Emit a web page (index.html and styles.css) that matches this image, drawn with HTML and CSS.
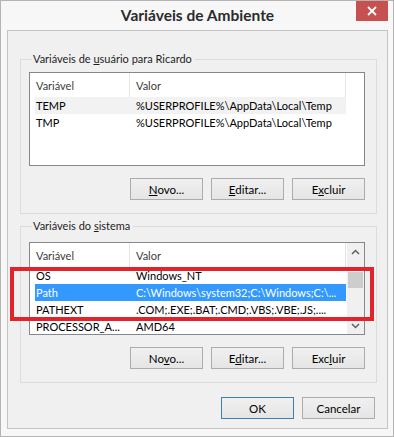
FILE: index.html
```html
<!DOCTYPE html>
<html lang="pt">
  <head>
    <meta charset="UTF-8" />
    <meta name="viewport" content="width=device-width, initial-scale=1.0" />
    <title>Variáveis de Ambiente</title>
    <link rel="stylesheet" href="styles.css">
  </head>
  <body>
    <div class="window">
      <header class="titlebar">
        <span></span>
        <h1 class="title">Variáveis de Ambiente</h1>
        <button class="close" aria-label="Fechar">
          <svg width="10" height="10" viewBox="0 0 10 10">
            <path d="M1 1 L9 9 M9 1 L1 9" stroke="#fff" stroke-width="1.8" fill="none" />
          </svg>
        </button>
      </header>

      <main class="client">
        <fieldset class="group">
          <legend>Variáveis de <u>u</u>suário para Ricardo</legend>
          <div class="list">
            <div class="list-body">
              <div class="list-head">
                <span class="col-name">Variável</span>
                <span class="col-value">Valor</span>
              </div>
              <div class="row hover">
                <span class="col-name">TEMP</span>
                <span class="col-value">%USERPROFILE%\AppData\Local\Temp</span>
              </div>
              <div class="row">
                <span class="col-name">TMP</span>
                <span class="col-value">%USERPROFILE%\AppData\Local\Temp</span>
              </div>
            </div>
          </div>
          <div class="buttons">
            <button class="btn"><u>N</u>ovo...</button>
            <button class="btn"><u>E</u>ditar...</button>
            <button class="btn">E<u>x</u>cluir</button>
          </div>
        </fieldset>

        <fieldset class="group system">
          <legend>Variáveis do <u>s</u>istema</legend>
          <div class="list">
            <div class="list-body">
              <div class="list-head">
                <span class="col-name">Variável</span>
                <span class="col-value">Valor</span>
              </div>
              <div class="row">
                <span class="col-name">OS</span>
                <span class="col-value">Windows_NT</span>
              </div>
              <div class="row selected">
                <span class="col-name">Path</span>
                <span class="col-value">C:\Windows\system32;C:\Windows;C:\...</span>
              </div>
              <div class="row">
                <span class="col-name">PATHEXT</span>
                <span class="col-value">.COM;.EXE;.BAT;.CMD;.VBS;.VBE;.JS;....</span>
              </div>
              <div class="row">
                <span class="col-name">PROCESSOR_A...</span>
                <span class="col-value">AMD64</span>
              </div>
            </div>
            <div class="scrollbar">
              <span class="arrow">
                <svg width="9" height="6" viewBox="0 0 9 6"><path d="M1 5 L4.5 1.5 L8 5" stroke="#606060" stroke-width="1.5" fill="none" /></svg>
              </span>
              <span class="track"><span class="thumb"></span></span>
              <span class="arrow">
                <svg width="9" height="6" viewBox="0 0 9 6"><path d="M1 1 L4.5 4.5 L8 1" stroke="#606060" stroke-width="1.5" fill="none" /></svg>
              </span>
            </div>
          </div>
          <div class="buttons">
            <button class="btn">No<u>v</u>o...</button>
            <button class="btn">E<u>d</u>itar...</button>
            <button class="btn">Exc<u>l</u>uir</button>
          </div>
        </fieldset>

        <div class="buttons dialog">
          <button class="btn default">OK</button>
          <button class="btn">Cancelar</button>
        </div>
      </main>

      <div class="callout"></div>
    </div>
  </body>
</html>
```

FILE: styles.css
```css
/* styles.css */
* {
  box-sizing: border-box;
}

body {
  margin: 0;
  background-color: #f7f7f7;
  font-family: Lato, "Noto Sans", sans-serif;
  font-size: 11px;
  color: #000;
}

.window {
  position: relative;
  width: 394px;
  height: 437px;
  border: 1px solid #b4b4b4;
  padding: 0 5px 7px 6px;
  background-color: #f7f7f7;
  display: flex;
  flex-direction: column;
}

.titlebar {
  height: 29px;
  display: grid;
  grid-template-columns: 1fr auto 1fr;
  align-items: start;
}

.title {
  margin: 5px 0 0;
  font-size: 15.5px;
  font-weight: bold;
  color: #2b2b2b;
  line-height: 19px;
}

.close {
  justify-self: end;
  width: 32px;
  height: 20px;
  border: none;
  padding: 0;
  background-color: #c75050;
  display: flex;
  justify-content: center;
  align-items: center;
}

.client {
  flex: 1;
  border: 1px solid #c3c3c3;
  background-color: #f0f0f0;
  display: flex;
  flex-direction: column;
}

.group {
  margin: 20px 10px 0 12px;
  padding: 5px 11px 13px 8px;
  border: 1px solid #dcdcdc;
  min-inline-size: 0;
}

.group.system {
  margin-top: 4px;
  padding-top: 8px;
}

.group legend {
  padding: 0 3px 0 1px;
  margin-left: 3px;
  line-height: 16px;
  color: #1e1e1e;
}

.list {
  height: 94px;
  border: 1px solid #828790;
  background-color: #fff;
  display: flex;
  overflow: hidden;
}

.system .list {
  height: 93px;
}

.list-body {
  flex: 1;
  overflow: hidden;
}

.list-head {
  display: flex;
  height: 24px;
  align-items: stretch;
}

.list-head span {
  display: flex;
  align-items: center;
  padding-left: 6px;
  border-right: 1px solid #e5e5e5;
  color: #3c3c3c;
}

.list-head .col-name {
  width: 100px;
}

.list-head .col-value {
  width: 216px;
}

.row {
  display: flex;
  height: 17px;
  margin-left: 5px;
  width: 311px;
  align-items: center;
  white-space: nowrap;
}

.row .col-name {
  width: 95px;
  flex: none;
  padding-left: 1px;
}

.row .col-value {
  padding-left: 6px;
  overflow: hidden;
}

.row.hover {
  background-color: #f2f2f2;
}

.row.selected {
  background-color: #3399ff;
  color: #fff;
}

.scrollbar {
  width: 17px;
  margin-left: 1px;
  background-color: #f0f0f0;
  display: flex;
  flex-direction: column;
}

.arrow {
  height: 17px;
  display: flex;
  justify-content: center;
  align-items: center;
}

.track {
  flex: 1;
  padding-top: 12px;
}

.thumb {
  display: block;
  height: 16px;
  margin: 0 1px;
  background-color: #cdcdcd;
}

.buttons {
  display: flex;
  justify-content: flex-end;
  gap: 8px;
  margin-top: 12px;
}

.btn {
  width: 73px;
  height: 22px;
  padding: 0;
  border: 1px solid #acacac;
  background: linear-gradient(#f0f0f0, #e5e5e5);
  font-family: inherit;
  font-size: 11.5px;
  color: #000;
}

.btn.default {
  border-color: #3c7fb1;
}

.buttons.dialog {
  margin: 14px 12px 0 0;
}

.callout {
  position: absolute;
  left: 9px;
  top: 266px;
  width: 364px;
  height: 54px;
  border: 4px solid #e3232b;
}
```
